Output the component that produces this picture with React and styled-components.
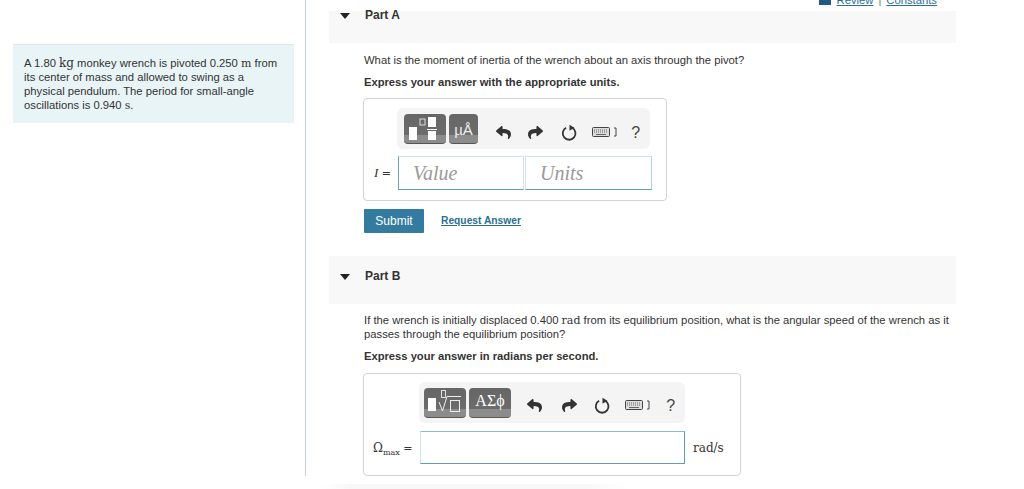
import React from "react";
import styled, { createGlobalStyle } from "styled-components";
import { FaReply, FaShare } from "react-icons/fa";

const GlobalStyle = createGlobalStyle`
  html, body {
    margin: 0;
    padding: 0;
    height: 489px;
    overflow: hidden;
    background: #fff;
    color: #333;
    font-family: "Liberation Sans", Arial, sans-serif;
  }
`;

const Page = styled.div`
  display: flex;
  align-items: flex-start;
  height: 489px;
  overflow: hidden;
`;

const Sidebar = styled.aside`
  box-sizing: border-box;
  width: 306px;
  height: 476px;
  flex: none;
  padding: 44px 11px 0 13px;
  border-right: 1px solid #c6d0df;
`;

const ProblemBox = styled.div`
  box-sizing: border-box;
  height: 79px;
  padding: 11px 12px 0 11px;
  background: #e9f4f7;
  border-top: 1px solid #dfe8ee;
  font-size: 11.25px;
  line-height: 14px;
`;

const Unit = styled.span`
  font-family: "DejaVu Serif", serif;
  font-size: ${(p) => p.$size || 11}px;
  line-height: 0;
`;

const Main = styled.main`
  width: 627px;
  margin-left: 23px;
  flex: none;
`;

const TopLinks = styled.div`
  display: flex;
  justify-content: flex-end;
  align-items: flex-end;
  height: 6px;
  margin-bottom: 5px;
  padding-right: 19px;
  overflow: hidden;
  font-size: 11.25px;
  line-height: 11px;
`;

const TopLink = styled.a`
  color: #2b6f95;
  text-decoration: underline;
`;

const Separator = styled.span`
  margin: 0 5px;
  color: #777;
`;

const BookIcon = styled.span`
  width: 12px;
  height: 5px;
  margin-right: 6px;
  align-self: flex-start;
  background: linear-gradient(90deg, #1d5a7d 46%, #fff 46%, #fff 54%, #1d5a7d 54%);
`;

const PartHeader = styled.div`
  box-sizing: border-box;
  display: flex;
  align-items: flex-start;
  height: ${(p) => p.$height}px;
  padding: ${(p) => p.$pad}px 0 0 11px;
  background: #f8f8f8;
`;

const Caret = styled.span`
  width: 0;
  height: 0;
  margin-top: 2px;
  border-top: 6px solid #222;
  border-left: 5px solid transparent;
  border-right: 5px solid transparent;
`;

const PartTitle = styled.span`
  margin-left: 15px;
  font-size: 12px;
  font-weight: bold;
  line-height: 8px;
  color: #333;
`;

const PartBody = styled.section`
  padding-left: 35px;
  padding-top: ${(p) => p.$top}px;
`;

const Question = styled.p`
  margin: 0 0 8px;
  font-size: 11.25px;
  line-height: 14px;
`;

const Instruction = styled.p`
  margin: 0 0 ${(p) => p.$after}px;
  font-size: 11.2px;
  font-weight: bold;
  line-height: 14px;
`;

const AnswerBox = styled.div`
  box-sizing: border-box;
  width: ${(p) => p.$width}px;
  height: 103px;
  margin-left: -1px;
  padding: ${(p) => p.$padTop}px 0 0 9px;
  border: 1px solid #d3d3d3;
  border-radius: 4px;
`;

const Toolbar = styled.div`
  box-sizing: border-box;
  display: flex;
  align-items: center;
  width: ${(p) => p.$width}px;
  height: 41px;
  margin-left: ${(p) => p.$left}px;
  padding-left: ${(p) => p.$pad}px;
  background: #f4f4f4;
  border-radius: 6px;
`;

const ToolGroup = styled.div`
  display: flex;
  gap: 3px;
  margin-right: ${(p) => p.$after}px;
`;

const ToolButton = styled.div`
  box-sizing: border-box;
  display: flex;
  align-items: flex-start;
  justify-content: center;
  width: ${(p) => p.$width}px;
  height: 30px;
  padding-top: 2px;
  border-radius: 4px;
  border-bottom: 1px solid #555;
  background: linear-gradient(#666 0, #6c6c6c 72%, #8c8c8c 72%, #8c8c8c 100%);
  color: #fff;
  font-family: "Liberation Serif", serif;
  font-size: 16px;
  line-height: 22px;
  white-space: nowrap;
`;

const MuLabel = styled.span`
  margin-top: 3px;
  font-family: "Liberation Sans", sans-serif;
  font-size: 15px;
  color: #eee;
`;

const ToolIcon = styled.div`
  display: flex;
  align-items: center;
  justify-content: center;
  width: ${(p) => p.$width}px;
  height: 24px;
  margin-top: ${(p) => p.$shift}px;
  color: #333;
  font-size: 15px;
`;

const Help = styled.span`
  font-size: 16px;
  color: #444;
`;

const InputRow = styled.div`
  display: flex;
  align-items: center;
  margin-top: ${(p) => p.$top}px;
`;

const MathLabel = styled.label`
  display: block;
  flex: none;
  width: ${(p) => p.$width}px;
  padding-left: ${(p) => p.$pad || 0}px;
  box-sizing: border-box;
  font-family: "DejaVu Serif", serif;
  font-size: 11px;
  white-space: nowrap;
`;

const ItalicVar = styled.i`
  font-family: "Liberation Serif", serif;
  font-size: 13px;
`;

const Omega = styled.span`
  font-size: 12px;
`;

const Sub = styled.sub`
  font-size: 8px;
  line-height: 0;
`;

const Field = styled.input`
  box-sizing: border-box;
  display: block;
  width: ${(p) => p.$width}px;
  height: ${(p) => p.$height}px;
  margin-right: ${(p) => p.$after || 0}px;
  padding: 0 0 0 14px;
  border: 1px solid #d5e3e9;
  border-bottom-color: #5f9db8;
  border-left-color: ${(p) => p.$leftColor || "#6aa3bb"};
  border-right-color: ${(p) => p.$rightColor || "#d5e3e9"};
  border-top-color: ${(p) => p.$topColor || "#d5e3e9"};
  border-radius: 0;
  outline: none;
  background: #fff;
  font-family: "Liberation Serif", serif;
  font-size: 20px;
  font-style: italic;
  &::placeholder {
    color: #999;
    opacity: 1;
  }
`;

const UnitText = styled.span`
  margin-left: 8px;
  font-family: "DejaVu Serif", serif;
  font-size: 12px;
  color: #333;
`;

const Actions = styled.div`
  display: flex;
  align-items: center;
  margin: 8px 0 23px;
`;

const SubmitButton = styled.button`
  width: 60px;
  height: 24px;
  padding: 0;
  border: 0;
  border-radius: 1px;
  background: #337ca0;
  color: #fff;
  font-family: "Liberation Sans", Arial, sans-serif;
  font-size: 12px;
`;

const RequestLink = styled.a`
  margin: -1px 0 0 17px;
  color: #2b6f95;
  font-size: 10.25px;
  font-weight: bold;
  text-decoration: underline;
`;

const BottomFade = styled.div`
  width: 310px;
  height: 5px;
  margin: 8px 0 0 -44px;
  background: linear-gradient(90deg, #fff, #f8f8f8 10%, #f8f8f8 85%, #fff);
`;

const ReloadIcon = () => (
  <svg width="17" height="18" viewBox="0 0 16 17" aria-hidden="true">
    <path d="M10.5 3.6 A6 6 0 1 1 4.8 3.6" fill="none" stroke="#333" strokeWidth="1.7" />
    <path d="M8 0.6 L12.6 3.6 L8 6.4 Z" fill="#333" />
  </svg>
);

const KeyboardIcon = () => (
  <svg width="25" height="11" viewBox="0 0 25 11" aria-hidden="true">
    <rect x="0.5" y="0.5" width="17" height="9" rx="1" fill="#ddd" stroke="#444" />
    <path d="M2 3h14M2 5h14" stroke="#666" strokeWidth="1" strokeDasharray="1 1" />
    <path d="M4 7.5h10" stroke="#666" strokeWidth="1" />
    <path d="M22 1h2v8h-2" fill="none" stroke="#444" strokeWidth="1" />
  </svg>
);

const TemplatesGlyph = () => (
  <svg width="32" height="26" viewBox="0 0 32 26" aria-hidden="true">
    <rect x="0" y="11" width="8" height="13" fill="#fff" />
    <rect x="11" y="3" width="5" height="6" fill="none" stroke="#ddd" />
    <rect x="19" y="1" width="8" height="10" fill="#fff" />
    <rect x="18" y="13" width="10" height="1" fill="#fff" />
    <rect x="19" y="15" width="8" height="9" fill="#fff" />
  </svg>
);

const RootGlyph = () => (
  <svg width="36" height="26" viewBox="0 0 36 26" aria-hidden="true">
    <rect x="1" y="8" width="8" height="13" fill="#fff" />
    <rect x="14.5" y="0.5" width="4" height="7" fill="none" stroke="#ddd" />
    <path d="M12 12 L15.5 21 L20 6.5 H34" fill="none" stroke="#eee" strokeWidth="1" />
    <rect x="23.5" y="10.5" width="9" height="11" fill="none" stroke="#eee" />
  </svg>
);

const ToolIcons = ({ widths, shift }) => (
  <>
    <ToolIcon $width={widths[0]} $shift={shift}>
      <FaReply />
    </ToolIcon>
    <ToolIcon $width={widths[1]} $shift={shift}>
      <FaShare />
    </ToolIcon>
    <ToolIcon $width={widths[2]} $shift={shift}>
      <ReloadIcon />
    </ToolIcon>
    <ToolIcon $width={widths[3]} $shift={shift}>
      <KeyboardIcon />
    </ToolIcon>
    <ToolIcon $width={widths[4]} $shift={shift}>
      <Help>?</Help>
    </ToolIcon>
  </>
);

export default function App() {
  return (
    <Page>
      <GlobalStyle />
      <Sidebar>
        <ProblemBox>
          A 1.80 <Unit $size={12}>kg</Unit> monkey wrench is pivoted 0.250 <Unit>m</Unit> from its
          center of mass and allowed to swing as a physical pendulum. The period for small-angle
          oscillations is 0.940 <Unit>s</Unit>.
        </ProblemBox>
      </Sidebar>
      <Main>
        <TopLinks>
          <BookIcon />
          <TopLink>Review</TopLink>
          <Separator>|</Separator>
          <TopLink>Constants</TopLink>
        </TopLinks>

        <PartHeader $height={32} $pad={0}>
          <Caret />
          <PartTitle>Part A</PartTitle>
        </PartHeader>
        <PartBody $top={10}>
          <Question>What is the moment of inertia of the wrench about an axis through the pivot?</Question>
          <Instruction $after={9}>Express your answer with the appropriate units.</Instruction>
          <AnswerBox $width={304} $padTop={9}>
            <Toolbar $width={253} $left={24} $pad={7}>
              <ToolGroup $after={10}>
                <ToolButton $width={42}>
                  <TemplatesGlyph />
                </ToolButton>
                <ToolButton $width={29}>
                  <MuLabel>µÅ</MuLabel>
                </ToolButton>
              </ToolGroup>
              <ToolIcons widths={[32, 33, 36, 35, 29]} shift={8} />
            </Toolbar>
            <InputRow $top={7}>
              <MathLabel $width={25} $pad={1}>
                <ItalicVar>I</ItalicVar> =
              </MathLabel>
              <Field $width={126} $height={34} $after={1} placeholder="Value" />
              <Field
                $width={127}
                $height={34}
                $leftColor="#d5e3e9"
                $rightColor="#b5d0dc"
                placeholder="Units"
              />
            </InputRow>
          </AnswerBox>
          <Actions>
            <SubmitButton>Submit</SubmitButton>
            <RequestLink>Request Answer</RequestLink>
          </Actions>
        </PartBody>

        <PartHeader $height={48} $pad={16}>
          <Caret />
          <PartTitle>Part B</PartTitle>
        </PartHeader>
        <PartBody $top={9}>
          <Question>
            If the wrench is initially displaced 0.400 <Unit>rad</Unit> from its equilibrium position, what is
            the angular speed of the wrench as it passes through the equilibrium position?
          </Question>
          <Instruction $after={10}>Express your answer in radians per second.</Instruction>
          <AnswerBox $width={378} $padTop={8}>
            <Toolbar $width={266} $left={46} $pad={5}>
              <ToolGroup $after={7}>
                <ToolButton $width={42}>
                  <RootGlyph />
                </ToolButton>
                <ToolButton $width={42}>ΑΣϕ</ToolButton>
              </ToolGroup>
              <ToolIcons widths={[34, 35, 33, 37, 29]} shift={6} />
            </Toolbar>
            <InputRow $top={8}>
              <MathLabel $width={47}>
                <Omega>Ω</Omega>
                <Sub>max</Sub> =
              </MathLabel>
              <Field
                $width={265}
                $height={33}
                $leftColor="#d5e3e9"
                $rightColor="#5f9db8"
                $topColor="#8fb9ca"
              />
              <UnitText>rad/s</UnitText>
            </InputRow>
          </AnswerBox>
          <BottomFade />
        </PartBody>
      </Main>
    </Page>
  );
}
